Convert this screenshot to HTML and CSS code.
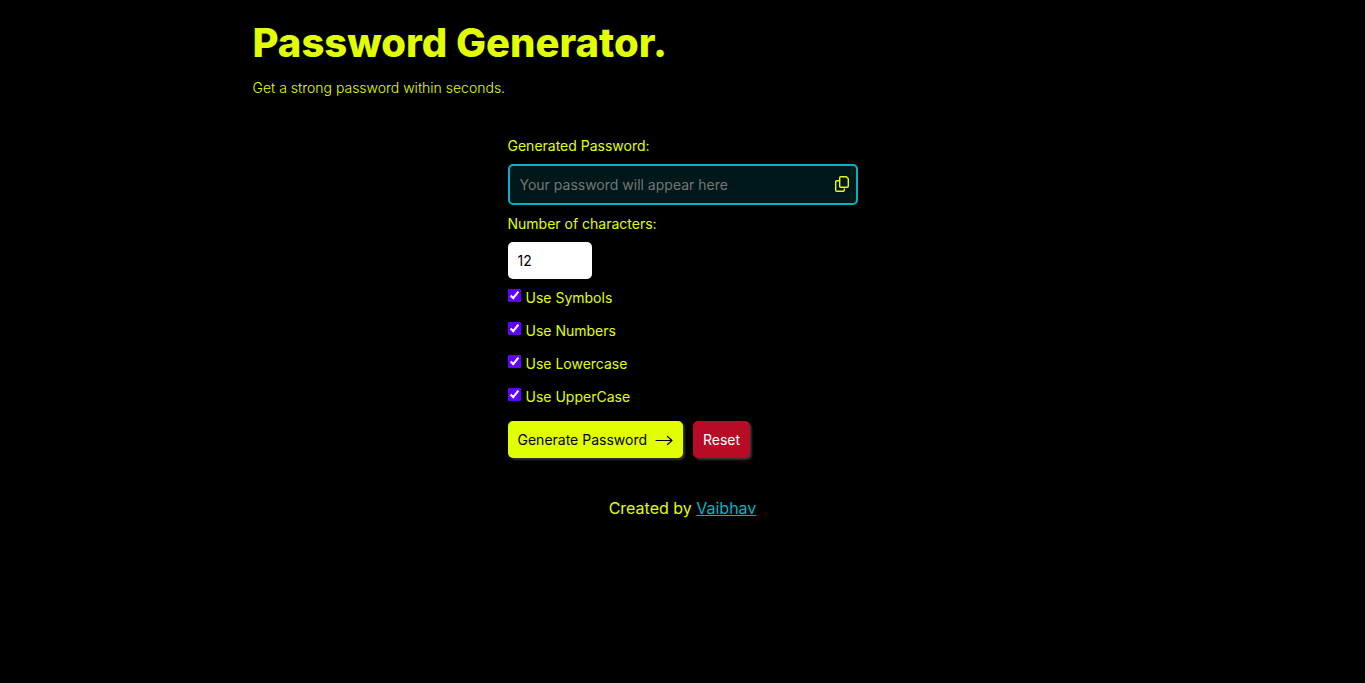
FILE: index.html
```html
<!DOCTYPE html>
<html lang="en">
<head>
<meta charset="utf-8">
<title>Password Generator</title>
<meta name="viewport" content="width=device-width, initial-scale=1">
<link rel="stylesheet" href="styles.css">
</head>
<body>
<main class="container">
  <header>
    <h1 class="title">Password Generator.</h1>
    <p class="tagline">Get a strong password within seconds.</p>
  </header>
  <form class="form">
    <label class="label" for="password">Generated Password:</label>
    <div class="output">
      <input class="output-input" type="text" id="password" placeholder="Your password will appear here" readonly>
      <button class="copy" type="button" aria-label="Copy password">
        <svg class="copy-icon" viewBox="0 0 14 16" fill="none" stroke="currentColor" stroke-width="1.4" stroke-linejoin="round" aria-hidden="true">
          <path d="M5.700 .7H11.300L13.300 2.700V10.300A1 1 0 0 1 12.300 11.300H5.700A1 1 0 0 1 4.700 10.300V1.700A1 1 0 0 1 5.700 .7Z"/>
          <path d="M4 4.700H1.700A1 1 0 0 0 .7 5.700V14.300A1 1 0 0 0 1.700 15.300H8.300A1 1 0 0 0 9.300 14.300V12.500"/>
        </svg>
      </button>
    </div>
    <label class="label" for="length">Number of characters:</label>
    <input class="length" type="number" id="length" value="12" min="4" max="64">
    <div class="options">
      <div class="option"><input class="check" type="checkbox" id="symbols" checked><label for="symbols">Use Symbols</label></div>
      <div class="option"><input class="check" type="checkbox" id="numbers" checked><label for="numbers">Use Numbers</label></div>
      <div class="option"><input class="check" type="checkbox" id="lowercase" checked><label for="lowercase">Use Lowercase</label></div>
      <div class="option"><input class="check" type="checkbox" id="uppercase" checked><label for="uppercase">Use UpperCase</label></div>
    </div>
    <div class="actions">
      <button class="button button-generate" type="button">Generate Password
        <svg class="arrow" viewBox="0 0 18 12" fill="none" stroke="currentColor" stroke-width="1.2" stroke-linecap="round" stroke-linejoin="round" aria-hidden="true"><path d="M1 6.500H17M12.500 2.500L17 6.500L12.500 10.500"/></svg>
      </button>
      <button class="button button-reset" type="reset">Reset</button>
    </div>
  </form>
  <footer class="footer">Created by <a class="author" href="#">Vaibhav</a></footer>
</main>
</body>
</html>
```

FILE: styles.css
```css
* {
  box-sizing: border-box;
}

body {
  margin: 0;
  background: #000;
  color: #e1ff00;
  font-family: Inter, "Liberation Sans", sans-serif;
  font-size: 14px;
  line-height: 18px;
}

.container {
  max-width: 860px;
  margin: 0 auto;
  padding-top: 18px;
}

.title {
  margin: 0;
  font-size: 40px;
  font-weight: 800;
  line-height: 50px;
}

.tagline {
  margin: 11px 0 0;
  font-weight: 300;
}

.form {
  display: flex;
  flex-direction: column;
  align-items: flex-start;
  max-width: 350px;
  margin: 40px auto 0;
}

.label {
  margin-bottom: 9px;
}

.output {
  display: flex;
  align-items: center;
  width: 100%;
  margin-bottom: 10px;
  padding-right: 7px;
  border: 2px solid #00b4c4;
  border-radius: 5px;
  background: #001819;
}

.output-input {
  flex: 1;
  min-width: 0;
  height: 37px;
  padding: 0 10px;
  border: 0;
  outline: 0;
  background: transparent;
  color: #e1ff00;
  font: inherit;
}

.output-input::placeholder {
  color: #757575;
}

.copy {
  display: flex;
  padding: 0 0 1px;
  border: 0;
  background: transparent;
  color: #e1ff00;
  cursor: pointer;
}

.copy-icon {
  width: 14px;
  height: 16px;
}

.length {
  width: 84px;
  height: 37px;
  padding: 0 10px;
  border: 0;
  border-radius: 5px;
  background: #fff;
  color: #000;
  font: inherit;
}

.options {
  display: flex;
  flex-direction: column;
  gap: 15px;
  margin-top: 10px;
}

.option {
  display: flex;
  align-items: flex-start;
  gap: 5px;
}

.check {
  width: 13px;
  height: 13px;
  margin: 0;
  accent-color: #6200ff;
}

.actions {
  display: flex;
  gap: 10px;
  margin-top: 15px;
}

.button {
  display: flex;
  align-items: center;
  gap: 8px;
  height: 37px;
  padding: 0 10px;
  border: 0;
  border-radius: 5px;
  box-shadow: 2px 2px 2px #333;
  font: inherit;
  cursor: pointer;
}

.button-generate {
  background: #e1ff00;
  color: #000;
}

.arrow {
  width: 18px;
  height: 12px;
}

.button-reset {
  background: #b80c26;
  color: #fff;
}

.footer {
  margin-top: 40px;
  font-size: 16px;
  line-height: 20px;
  text-align: center;
}

.author {
  color: #00b4c4;
}
```
